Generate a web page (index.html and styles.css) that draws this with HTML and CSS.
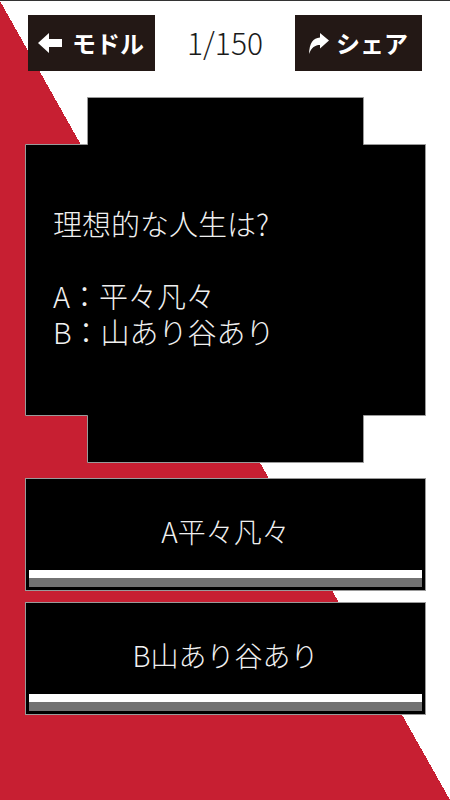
FILE: index.html
```html
<!DOCTYPE html>
<html lang="ja">
<head>
<meta charset="utf-8">
<title>Quiz</title>
<link rel="stylesheet" href="styles.css">
</head>
<body>
<div class="screen">
  <header class="topbar">
    <button class="navbtn">
      <svg class="ico-back" viewBox="0 0 24 20" width="24" height="20"><polygon points="0,10 11,0 11,6 24,6 24,14 11,14 11,20" fill="#fff"/></svg>
      <span>モドル</span>
    </button>
    <div class="counter">1/150</div>
    <button class="navbtn">
      <svg class="ico-share" viewBox="0 0 20 21" width="20" height="21"><path d="M20 7.5 L11 0 L11 4.5 C4 5 0.5 10 0 21 C2.5 14.5 6 12 11 12 L11 15.5 Z" fill="#fff"/></svg>
      <span>シェア</span>
    </button>
  </header>

  <section class="card">
    <svg class="card-shape" viewBox="0 0 401 366" width="401" height="366">
      <polygon points="62.5,0.5 338.5,0.5 338.5,47.5 400.5,47.5 400.5,318.5 338.5,318.5 338.5,365.5 62.5,365.5 62.5,318.5 0.5,318.5 0.5,47.5 62.5,47.5" fill="#000" stroke="#9a9a9a" stroke-width="1"/>
    </svg>
    <p class="question">理想的な人生は?<br><br>A：平々凡々<br>B：山あり谷あり</p>
  </section>

  <div class="answers">
    <button class="answer">
      <span class="label">A平々凡々</span>
      <span class="bar-white"></span>
      <span class="bar-gray"></span>
    </button>
    <button class="answer">
      <span class="label">B山あり谷あり</span>
      <span class="bar-white"></span>
      <span class="bar-gray"></span>
    </button>
  </div>
</div>
</body>
</html>
```

FILE: styles.css
```css
html, body {
  margin: 0;
  padding: 0;
}
body {
  width: 450px;
  height: 800px;
  overflow: hidden;
  font-family: "Noto Sans CJK JP", "Noto Sans", sans-serif;
}
.screen {
  box-sizing: border-box;
  width: 450px;
  height: 800px;
  border-top: 1px solid #333;
  background: linear-gradient(to top right, #c71f32 50%, #ffffff 50%);
}
.topbar {
  display: flex;
  align-items: center;
  justify-content: space-between;
  padding: 14px 28px 0;
}
.navbtn {
  box-sizing: border-box;
  width: 127px;
  height: 56px;
  margin: 0;
  padding: 0 0 0 10px;
  border: none;
  background: #231815;
  color: #fff;
  display: flex;
  align-items: center;
  gap: 10px;
  font-family: inherit;
  font-size: 24px;
  font-weight: 700;
  line-height: 1;
}
.navbtn:last-child {
  padding-left: 14px;
  gap: 7px;
}
.ico-back, .ico-share {
  flex: none;
}
.counter {
  font-size: 30px;
  font-weight: 300;
  color: #1a1a1a;
  line-height: 1;
  padding-bottom: 2px;
}
.card {
  position: relative;
  width: 401px;
  height: 366px;
  margin: 26px 0 0 25px;
}
.card-shape {
  position: absolute;
  left: 0;
  top: 0;
}
.question {
  position: relative;
  margin: 0;
  padding: 108px 0 0 28px;
  color: #f0f0f0;
  font-size: 29px;
  font-weight: 300;
  line-height: 36px;
}
.answers {
  display: flex;
  flex-direction: column;
  gap: 11px;
  margin: 15px 0 0 25px;
  width: 401px;
}
.answer {
  box-sizing: border-box;
  display: flex;
  flex-direction: column;
  width: 401px;
  height: 113px;
  margin: 0;
  padding: 0 3px 3px;
  border: 1px solid #9a9a9a;
  background: #000;
  font-family: inherit;
}
.label {
  display: block;
  height: 91px;
  box-sizing: border-box;
  padding-top: 34px;
  color: #f0f0f0;
  font-size: 28px;
  font-weight: 300;
  line-height: 36px;
  text-align: center;
}
.bar-white {
  display: block;
  height: 8px;
  background: #ffffff;
}
.bar-gray {
  display: block;
  height: 9px;
  background: #727272;
}
```
